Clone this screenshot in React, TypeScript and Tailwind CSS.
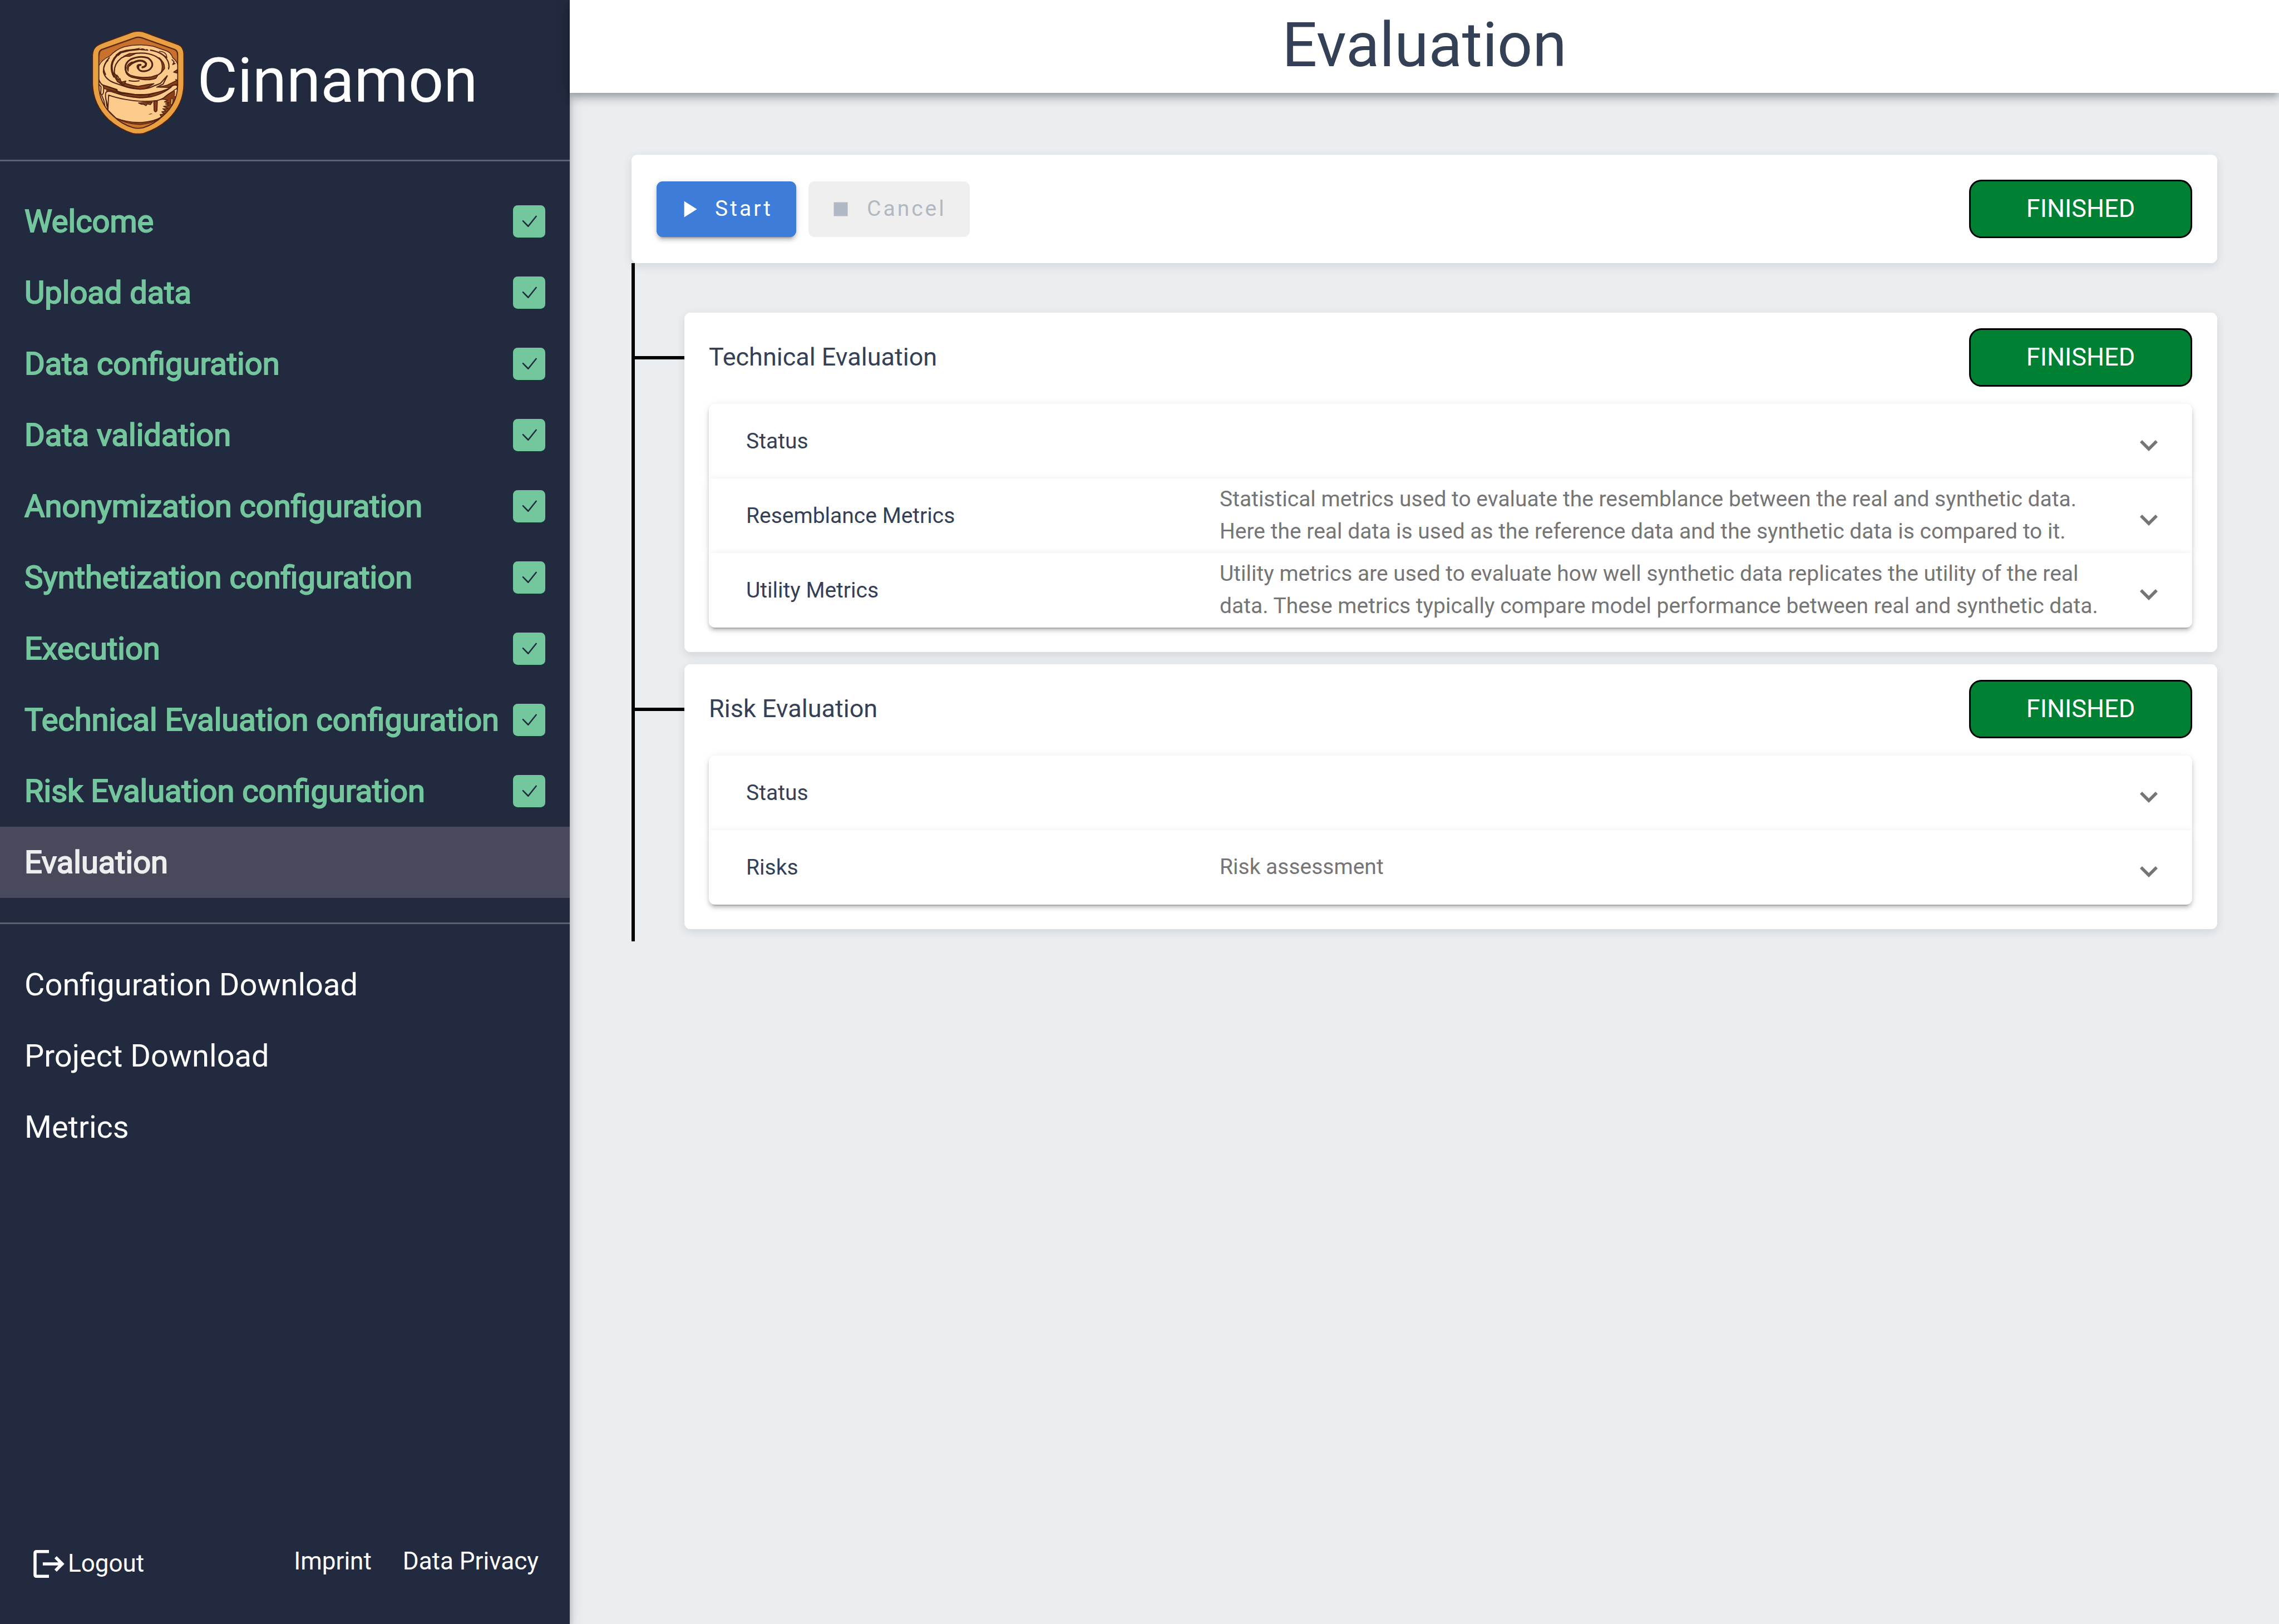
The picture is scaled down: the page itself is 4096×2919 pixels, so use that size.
const steps = [
  "Welcome",
  "Upload data",
  "Data configuration",
  "Data validation",
  "Anonymization configuration",
  "Synthetization configuration",
  "Execution",
  "Technical Evaluation configuration",
  "Risk Evaluation configuration",
];

const downloads = ["Configuration Download", "Project Download", "Metrics"];

type Panel = { title: string; description?: string };

const evaluations: { title: string; status: string; panels: Panel[] }[] = [
  {
    title: "Technical Evaluation",
    status: "FINISHED",
    panels: [
      { title: "Status" },
      {
        title: "Resemblance Metrics",
        description:
          "Statistical metrics used to evaluate the resemblance between the real and synthetic data. Here the real data is used as the reference data and the synthetic data is compared to it.",
      },
      {
        title: "Utility Metrics",
        description:
          "Utility metrics are used to evaluate how well synthetic data replicates the utility of the real data. These metrics typically compare model performance between real and synthetic data.",
      },
    ],
  },
  {
    title: "Risk Evaluation",
    status: "FINISHED",
    panels: [{ title: "Status" }, { title: "Risks", description: "Risk assessment" }],
  },
];

function Logo() {
  const inner =
    "M303 99 Q321 93 341 99 L532 167 Q551 174 551 196 V380 Q548 482 468 553 Q414 604 352 624 Q320 632 290 624 Q226 606 172 553 Q94 482 91 380 V198 Q92 175 108 168 Z";
  return (
    <svg viewBox="50 58 542 607" className="h-[187px] w-[167px] shrink-0" role="img" aria-label="Cinnamon logo">
      <defs>
        <clipPath id="shield">
          <path d={inner} />
        </clipPath>
      </defs>
      <path
        d="M296 64 Q320 59 346 64 Q372 72 400 84 L555 140 Q586 154 587 196 V370 Q586 492 494 578 Q432 632 352 658 Q320 664 288 658 Q210 634 148 578 Q58 492 54 370 V200 Q56 160 84 144 Q100 134 140 120 L240 84 Q274 70 296 64 Z"
        fill="#e8a043"
        stroke="#4f2412"
        strokeWidth="6"
      />
      <path d={inner} fill="#c8722e" />
      <g clipPath="url(#shield)" strokeLinecap="round" strokeLinejoin="round">
        {/* shadow below the rim */}
        <path d="M91 200 Q92 176 108 168 L303 99 Q321 93 341 99 L532 167 Q551 174 551 196" fill="none" stroke="#9c4d1b" strokeWidth="12" />
        {/* body in shade */}
        <path d="M80 320 H560 V500 L470 572 Q320 620 190 566 L80 480 Z" fill="#8a3f16" stroke="#4f2412" strokeWidth="5" />
        <path d="M200 572 Q320 606 448 574 Q400 600 330 606 Q250 602 200 572 Z" fill="#8a3f16" stroke="#4f2412" strokeWidth="4" />
        {/* left flank */}
        <path d="M84 350 L110 376 L134 400 L134 440 L144 524 L84 500 Z" fill="#fccb8b" />
        <path d="M92 372 L104 386 L102 428 Q114 436 118 420 L120 388 M108 436 L120 466 L126 496 M130 440 L138 500" fill="none" stroke="#4f2412" strokeWidth="6" />
        {/* front face */}
        <path
          d="M144 430 Q220 454 322 464 Q352 470 408 466 L466 458 L492 464 L474 474 L502 480 L480 486 L502 494 L468 500 L496 514 L464 514 L482 528 L458 532 L472 544 L448 548 L456 562 Q410 592 322 594 Q250 592 190 568 L142 520 Z"
          fill="#fccb8b"
          stroke="#4f2412"
          strokeWidth="5"
        />
        <path d="M322 480 L404 474 L392 490 L374 486 L366 496 L352 488 L340 488 Z" fill="#8a3f16" stroke="#4f2412" strokeWidth="5" />
        <path d="M380 547 Q392 540 405 542 Q394 549 380 547 Z" fill="#4f2412" />
        {/* lower frosting layer */}
        <path
          d="M84 330 L92 352 L110 374 L150 384 L196 398 L200 416 L240 424 Q320 440 396 430 L470 408 L520 390 L556 366 L556 340 L500 300 L100 300 Z"
          fill="#fccb8b"
          stroke="#4f2412"
          strokeWidth="6"
        />
        {/* glaze running over the front */}
        <path
          d="M132 420 Q140 404 184 420 Q250 444 330 450 Q400 450 450 426 Q500 404 520 380 Q544 370 551 384 L546 396 L524 412 Q500 424 470 450 Q440 468 414 468 Q330 476 250 460 Q190 450 148 434 L144 520 L138 480 Q126 440 132 420 Z"
          fill="#fccb8b"
          stroke="#4f2412"
          strokeWidth="6"
        />
        <path d="M412 468 L414 524 Q422 540 430 524 L432 468 Z" fill="#8a3f16" stroke="#4f2412" strokeWidth="6" />
        <path d="M530 404 Q536 424 530 440 Q540 452 548 430 L551 396 Z M514 452 Q526 452 522 474 Q518 496 510 488 Z" fill="#fccb8b" stroke="#4f2412" strokeWidth="4" />
        {/* top disc */}
        <path
          d="M86 258 Q110 226 156 206 Q190 168 240 152 Q320 132 410 150 Q448 164 480 174 Q512 184 522 216 Q546 236 556 256 V330 Q540 348 500 352 L440 386 L478 390 L500 392 Q450 420 396 426 Q300 436 196 400 L110 374 Q92 352 88 316 Z"
          fill="#fccb8b"
        />
        <path d="M91 262 Q110 226 156 206 Q190 168 240 152 Q320 132 410 150 Q448 164 480 174 Q512 184 522 216 Q546 236 551 256" fill="none" stroke="#4f2412" strokeWidth="5" />
        <path d="M91 344 Q100 368 116 376 L150 386 L196 402 L186 408 L230 420 L300 430 Q360 434 396 426 Q470 412 510 390" fill="none" stroke="#4f2412" strokeWidth="6" />
        <path d="M116 378 L150 388 L192 404 L200 414 L182 412 L120 396 Z M196 424 L280 430 L334 436 L390 432 L376 444 L330 448 L240 438 Z" fill="#8a3f16" stroke="#4f2412" strokeWidth="5" />
        <path d="M438 388 L490 376 L551 346 V370 L520 378 L498 390 Z" fill="#8a3f16" stroke="#4f2412" strokeWidth="5" />
        {/* rings */}
        <path d="M152 216 Q116 254 118 300 Q128 344 184 364 L256 388 Q350 412 410 382 L450 366 L490 322 L466 370 L430 388" fill="none" stroke="#4f2412" strokeWidth="7" />
        <path d="M192 340 Q250 376 322 384 Q370 372 412 368 L376 390 Q350 404 318 398 L262 388 Q210 374 192 340 Z" fill="#8a3f16" stroke="#4f2412" strokeWidth="6" />
        <path d="M216 186 Q172 216 166 262 Q164 300 180 326" fill="none" stroke="#4f2412" strokeWidth="12" />
        <path d="M180 304 L192 320 L200 342 L214 338 L222 360 L248 352 L240 372 L200 356 L180 322 Z" fill="#8a3f16" stroke="#4f2412" strokeWidth="6" />
        <path d="M188 200 L214 180 L250 170 L300 164 L336 158 L378 168 L380 176 L330 172 L270 178 L222 190 L206 206 Z" fill="#4f2412" />
        <path d="M330 163 Q350 155 364 166" fill="none" stroke="#fccb8b" strokeWidth="5" />
        <path d="M392 172 Q460 184 486 222 Q506 252 498 282" fill="none" stroke="#4f2412" strokeWidth="7" />
        <path d="M444 180 Q470 178 484 198 L488 216 L470 202 L450 190" fill="none" stroke="#4f2412" strokeWidth="5" />
        <path d="M182 308 Q176 254 222 218 Q280 184 360 190 Q446 202 466 254 Q474 294 440 314" fill="none" stroke="#4f2412" strokeWidth="7" />
        <path d="M236 208 L270 192 L306 192 L270 208 Z M442 216 Q478 246 474 280 L454 304 Q472 256 442 216 Z" fill="#8a3f16" stroke="#4f2412" strokeWidth="5" />
        <path d="M246 280 Q250 304 274 318 Q330 338 398 328 L436 316 L424 336 Q390 350 340 342 L282 330 Q244 316 246 280 Z" fill="#8a3f16" stroke="#4f2412" strokeWidth="6" />
        <path d="M248 290 Q238 250 276 226 Q330 202 378 218 Q412 242 400 270 Q384 298 346 295 Q318 292 322 268" fill="none" stroke="#4f2412" strokeWidth="10" />
        <path d="M320 278 Q310 258 334 258 M346 272 Q368 268 366 250 Q352 230 322 234 Q290 240 268 262" fill="none" stroke="#4f2412" strokeWidth="12" />
        <path d="M254 276 Q256 250 286 240 L266 264 L262 296 Z" fill="#8a3f16" stroke="#4f2412" strokeWidth="4" />
        <path d="M268 350 Q300 356 326 351 M118 282 L124 300 L130 314 M196 318 L206 332 M120 272 Q128 244 144 232" fill="none" stroke="#4f2412" strokeWidth="7" />
        <path d="M518 228 L530 240 L522 256 L536 250 M528 300 L549 286 V306 Z M540 344 L549 350" fill="#8a3f16" stroke="#4f2412" strokeWidth="6" />
      </g>
      <path d={inner} fill="none" stroke="#4f2412" strokeWidth="6" />
    </svg>
  );
}

function CheckBadge() {
  return (
    <svg viewBox="0 0 63 63" className="size-[58px] shrink-0" role="img" aria-label="Completed">
      <rect width="63" height="63" rx="9" fill="#74c69d" />
      <path d="M19.5 30.5 L29.7 41 L45.3 21.5" fill="none" stroke="#222a3f" strokeWidth="2.8" strokeLinecap="round" strokeLinejoin="round" />
    </svg>
  );
}

function LogoutIcon() {
  return (
    <svg viewBox="0 0 60 54" className="h-[50px] w-14" aria-hidden="true">
      <path d="M30 3 H6 Q3 3 3 6 V48 Q3 51 6 51 H30" fill="none" stroke="#fff" strokeWidth="6" />
      <path d="M18 24 H48.3 L40.7 16.3 L45 12 L60 27 L45 42 L40.7 37.7 L48.3 30 H18 Z" fill="#fff" />
    </svg>
  );
}

function Chevron() {
  return (
    <svg viewBox="0 0 11.31 7.07" className="-mr-[5px] mt-4 h-5 w-8 shrink-0" aria-hidden="true">
      <path d="M0 1.41 L1.41 0 L5.66 4.24 L9.9 0 L11.31 1.41 L5.66 7.07 Z" fill="#757575" />
    </svg>
  );
}

function StatusBadge({ label }: { label: string }) {
  return (
    <span className="flex h-[105px] w-[401px] shrink-0 items-center justify-center rounded-[22px] border-[3px] border-black bg-[#008033] pb-[3px] text-[45px] leading-[53px] text-white">
      {label}
    </span>
  );
}

function Sidebar() {
  return (
    <aside className="relative z-10 flex w-1/4 shrink-0 flex-col bg-[#222a3f] text-white shadow-[0_6px_11px_-3px_rgba(0,0,0,0.2),0_11px_14px_0_rgba(0,0,0,0.14),0_3px_28px_0_rgba(0,0,0,0.12)]">
      <div className="flex items-center justify-center gap-[22px] border-b-[3px] border-[#5b6072] pt-[55px] pb-[45px]">
        <Logo />
        <span className="pb-2 text-[111px] leading-[130px]">Cinnamon</span>
      </div>
      <nav aria-label="Workflow" className="border-b-[3px] border-[#5b6072] py-11">
        <ul>
          {steps.map((step) => (
            <li key={step}>
              <a href="#" className="flex h-32 items-center justify-between px-11 text-[56px] whitespace-nowrap text-[#74c69d] [-webkit-text-stroke:2px_#74c69d]">
                {step}
                <CheckBadge />
              </a>
            </li>
          ))}
          <li>
            <a href="#" aria-current="page" className="flex h-32 items-center bg-[#484a5c] px-11 text-[56px] text-[#eeeeee] [-webkit-text-stroke:2px_#eeeeee]">
              Evaluation
            </a>
          </li>
        </ul>
      </nav>
      <nav aria-label="Downloads" className="py-[45px]">
        <ul>
          {downloads.map((item) => (
            <li key={item}>
              <a href="#" className="flex h-32 items-center px-11 text-[56px]">
                {item}
              </a>
            </li>
          ))}
        </ul>
      </nav>
      <div className="mt-auto flex items-end justify-between px-14 pb-[82px] text-[44px] leading-[53px]">
        <button type="button" className="flex items-center gap-1.5 pl-1">
          <LogoutIcon />
          Logout
        </button>
        <div className="flex gap-14 pb-1">
          <a href="#">Imprint</a>
          <a href="#">Data Privacy</a>
        </div>
      </div>
    </aside>
  );
}

export default function App() {
  return (
    <div className="flex min-h-screen bg-[#eaeef1] font-[Roboto,sans-serif] text-[#334056]">
      <Sidebar />
      <div className="min-w-0 flex-1">
        <header className="relative z-20 bg-white pt-[15px] pb-5 text-center shadow-[0_6px_11px_-3px_rgba(0,0,0,0.2),0_11px_14px_0_rgba(0,0,0,0.14),0_3px_28px_0_rgba(0,0,0,0.12)]">
          <h1 className="text-[111px] leading-[132px]">Evaluation</h1>
        </header>
        <main className="p-[111px]">
          <section className="flex items-center justify-between rounded-[11px] bg-white p-[45px] shadow-[0_5px_17px_rgba(0,0,0,0.11)]">
            <div className="flex gap-[22px] text-[39px] tracking-[4px]">
              <button
                type="button"
                className="flex h-[100px] items-center gap-[22px] rounded-[11px] bg-[#3d7dd9] pr-[42px] pl-[33px] text-white shadow-[0_8px_3px_-6px_rgba(0,0,0,0.2),0_6px_6px_0_rgba(0,0,0,0.14),0_3px_14px_0_rgba(0,0,0,0.12)]"
              >
                <svg viewBox="0 0 24 24" className="size-[50px]" fill="currentColor" aria-hidden="true">
                  <path d="M8 5v14l11-7z" />
                </svg>
                Start
              </button>
              <button type="button" disabled className="flex h-[100px] items-center gap-[22px] rounded-[11px] bg-[#efefef] pr-[42px] pl-[33px] text-[#afb8c3]">
                <svg viewBox="0 0 24 24" className="size-[50px]" fill="currentColor" aria-hidden="true">
                  <path d="M6 6h12v12H6z" />
                </svg>
                Cancel
              </button>
            </div>
            <StatusBadge label="FINISHED" />
          </section>
          <ul className="border-l-[6px] border-black pt-[89px]">
            {evaluations.map((evaluation) => (
              <li key={evaluation.title} className="flex pb-[22px]">
                <div className="mt-[78px] h-[6px] w-[89px] shrink-0 bg-black" />
                <section className="min-w-0 flex-1 rounded-[11px] bg-white pt-7 pr-[45px] pb-11 pl-11 shadow-[0_5px_17px_rgba(0,0,0,0.11)]">
                  <div className="mb-[31px] flex items-center justify-between">
                    <h2 className="pb-[3px] text-[45px] leading-[53px]">{evaluation.title}</h2>
                    <StatusBadge label={evaluation.status} />
                  </div>
                  {evaluation.panels.map((panel) => (
                    <button
                      key={panel.title}
                      type="button"
                      aria-expanded="false"
                      className="relative flex min-h-[134px] w-full items-center bg-white px-[67px] text-left text-[39px] leading-[58px] shadow-[0_8px_3px_-6px_rgba(0,0,0,0.2),0_6px_6px_0_rgba(0,0,0,0.14),0_3px_14px_0_rgba(0,0,0,0.12)] first-of-type:rounded-t-[11px] last-of-type:rounded-b-[11px]"
                    >
                      <span className="mr-[46px] flex-1">{panel.title}</span>
                      <span className="mr-11 flex-2 pb-0.5 text-[#757575]">{panel.description}</span>
                      <Chevron />
                    </button>
                  ))}
                </section>
              </li>
            ))}
          </ul>
        </main>
      </div>
    </div>
  );
}
